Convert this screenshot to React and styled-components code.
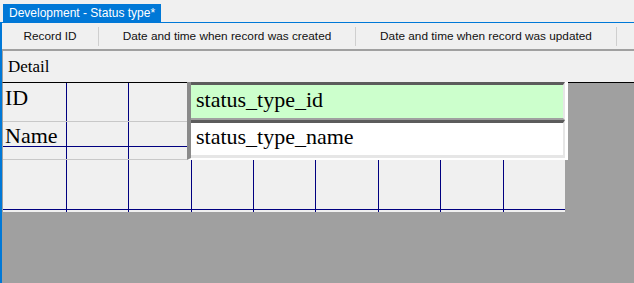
import React from "react";
import styled, { createGlobalStyle } from "styled-components";

const Global = createGlobalStyle`
  html, body { margin: 0; padding: 0; background: #f0f0f0; overflow: hidden; }
  #root { width: 634px; height: 283px; }
`;

const Window = styled.div`
  width: 634px;
  height: 283px;
  display: flex;
  flex-direction: column;
  background: #f0f0f0;
  font-family: "Liberation Sans", Arial, sans-serif;
`;

const TabStrip = styled.div`
  height: 18px;
  padding: 4px 0 0 3px;
  border-bottom: 1px solid #0078d7;
  display: flex;
`;

const Tab = styled.div`
  height: 18px;
  background: #0078d7;
  color: #fff;
  font-size: 12px;
  line-height: 18px;
  padding: 0 6px;
  white-space: nowrap;
`;

const Frame = styled.div`
  flex: 1;
  display: flex;
  flex-direction: column;
  border-left: 2px solid #0078d7;
  background: #a0a0a0;
  min-height: 0;
`;

const Toolbar = styled.div`
  height: 26px;
  display: flex;
  align-items: center;
  background: #f0f0f0;
`;

const HeaderCell = styled.div`
  width: ${(p) => p.$w}px;
  height: 100%;
  display: flex;
  align-items: center;
  justify-content: center;
  font-size: 11.8px;
  color: #111;
  white-space: nowrap;
`;

const Separator = styled.div`
  width: 1px;
  height: 19px;
  background: #cfcfcf;
`;

const Band = styled.div`
  height: 31px;
  border-top: 2px solid #a0a0a0;
  border-bottom: 1px solid #000;
  border-left: 1px solid #a0a0a0;
  background: #f0f0f0;
  padding-left: 5px;
  font-family: "Liberation Serif", "Times New Roman", serif;
  font-size: 17px;
  line-height: 31px;
  color: #000;
`;

const Canvas = styled.div`
  flex: 1;
  padding-left: 1px;
  background: #a0a0a0;
`;

const Section = styled.div`
  position: relative;
  width: 562px;
  height: 129px;
  background: #f0f0f0;
`;

const GridLayer = styled.svg`
  position: absolute;
  left: 0;
  top: 0;
`;

const Controls = styled.div`
  position: absolute;
  left: 0;
  top: 0;
  display: flex;
  align-items: flex-start;
`;

const LabelStack = styled.div`
  width: 184px;
  display: flex;
  flex-direction: column;
`;

const Label = styled.div`
  height: ${(p) => p.$h}px;
  box-sizing: content-box;
  border-bottom: 1px solid #c8c8c8;
  padding: ${(p) => p.$pt}px 0 0 2px;
  font-family: "Liberation Serif", "Times New Roman", serif;
  font-size: 22px;
  line-height: 22px;
  color: #000;
`;

const FieldStack = styled.div`
  width: 374px;
  margin-top: -1px;
  border-left: 4px solid #8a8a8a;
  border-right: 3px solid #fff;
  border-bottom: 2px solid #fff;
  display: flex;
  flex-direction: column;
`;

const Field = styled.div`
  height: ${(p) => p.$h}px;
  border-top: 3px solid #5c5c5c;
  border-right: 2px solid #e6e6e6;
  border-bottom: ${(p) => (p.$last ? "3px solid #e6e6e6" : "2px solid #a0a0a0")};
  background: ${(p) => (p.$bg ? p.$bg : "#fff")};
  padding: ${(p) => p.$pt}px 0 0 5px;
  box-sizing: content-box;
  font-family: "Liberation Serif", "Times New Roman", serif;
  font-size: 22px;
  line-height: 22px;
  color: #000;
`;

const vLines = [63, 125, 188, 250, 312, 375, 437, 500];
const hLines = [63, 126];

function Grid() {
  return (
    <GridLayer width="562" height="129" shapeRendering="crispEdges">
      {vLines.map((x) => (
        <line key={"v" + x} x1={x + 0.5} y1="0" x2={x + 0.5} y2="129" stroke="#000080" strokeWidth="1" />
      ))}
      {hLines.map((y) => (
        <line key={"h" + y} x1="0" y1={y + 0.5} x2="562" y2={y + 0.5} stroke="#000080" strokeWidth="1" />
      ))}
    </GridLayer>
  );
}

export default function App() {
  return (
    <>
      <Global />
      <Window>
        <TabStrip>
          <Tab>Development - Status type*</Tab>
        </TabStrip>
        <Frame>
          <Toolbar>
            <HeaderCell $w={96}>Record ID</HeaderCell>
            <Separator />
            <HeaderCell $w={256}>Date and time when record was created</HeaderCell>
            <Separator />
            <HeaderCell $w={260}>Date and time when record was updated</HeaderCell>
            <Separator />
          </Toolbar>
          <Band>Detail</Band>
          <Canvas>
            <Section>
              <Grid />
              <Controls>
                <LabelStack>
                  <Label $h={34} $pt={4}>ID</Label>
                  <Label $h={34} $pt={3}>Name</Label>
                </LabelStack>
                <FieldStack>
                  <Field $h={29} $pt={4} $bg="#ccffcc">status_type_id</Field>
                  <Field $h={29} $pt={3} $last>status_type_name</Field>
                </FieldStack>
              </Controls>
            </Section>
          </Canvas>
        </Frame>
      </Window>
    </>
  );
}
